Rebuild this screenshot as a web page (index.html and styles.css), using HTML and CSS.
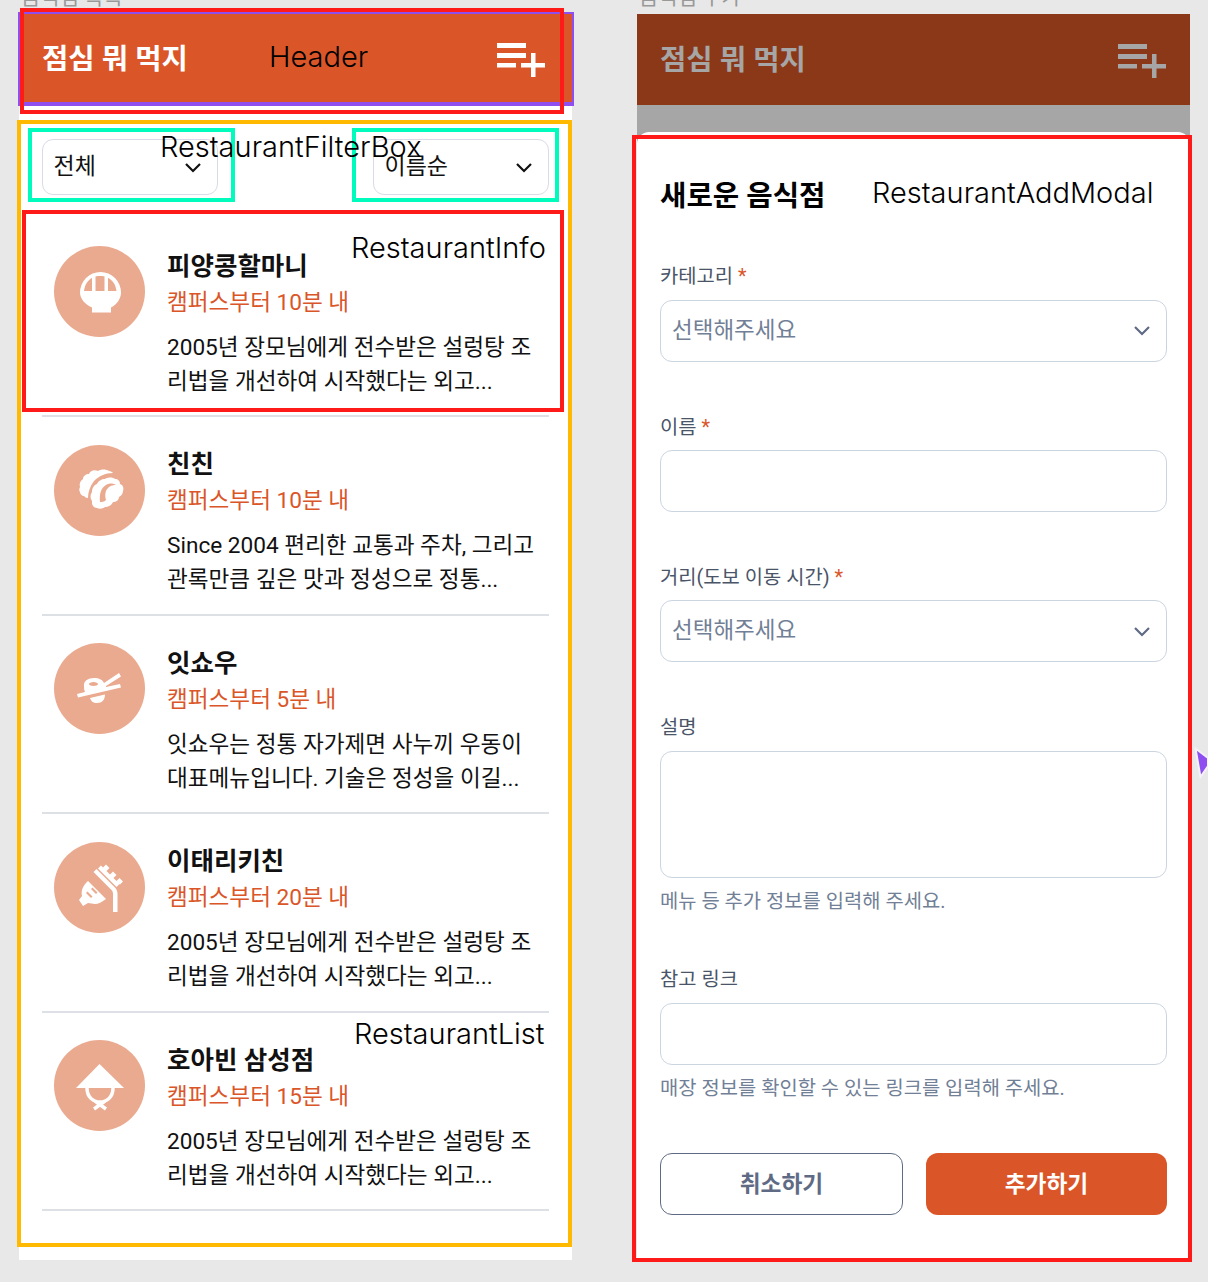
FILE: index.html
```html
<!DOCTYPE html>
<html lang="ko">
<head>
    <meta charset="UTF-8">
    <meta name="viewport" content="width=device-width, initial-scale=1.0">
    <title>점심 뭐 먹지</title>
    <link rel="stylesheet" href="styles.css">
</head>
<body>
    <div class="page">
        <section class="screen">
            <h2 class="screen-title">음식점 목록</h2>
            <div class="phone">
                <header class="header">
                    <h1 class="logo">점심 뭐 먹지</h1>
                    <svg class="add-icon" viewBox="0 0 48 34"><path d="M0 0h29v5H0zM0 10h29v5H0zM0 20h19v4.500H0zM24 20h10V10h4.500v10H48v4.500h-9.500V34H34v-9.500H24z"/></svg>
                </header>

                <div class="filters">
                    <div class="filter"><span>전체</span><svg class="chevron" viewBox="0 0 18 12"><path d="M2 2l7 7 7-7"/></svg></div>
                    <div class="filter"><span>이름순</span><svg class="chevron" viewBox="0 0 18 12"><path d="M2 2l7 7 7-7"/></svg></div>
                </div>

                <ul class="list">
                    <li class="item">
                        <div class="avatar">
                            <svg viewBox="0 0 70 70"><path fill-rule="evenodd" d="M35.500 15a20.500 20.500 0 0 1 20.500 20.500c0 6-4 12-10 15v5H27v-5c-7-3-12-9-12-15A20.500 20.500 0 0 1 35.500 15zM30.500 19.500V34h9V19.500c-3-.6-6-.6-9 0zM27 21c-4 2-7 6-8 13h8zM43 21v13h8.500c-1-7-4-11-8.500-13z"/></svg>
                        </div>
                        <div class="info">
                            <h3 class="name">피양콩할마니</h3>
                            <p class="distance">캠퍼스부터 10분 내</p>
                            <p class="desc">2005년 장모님에게 전수받은 설렁탕 조<br>리법을 개선하여 시작했다는 외고...</p>
                        </div>
                    </li>
                    <li class="item">
                        <div class="avatar">
                            <svg viewBox="0 0 70 70"><path d="M15 32c-1-3 0-6 3-8 0-3 3-5 6-5 1-3 5-5 9-3 3-2 8-2 11 0 2 0 3 1 4 2-8 0-14 3-19 8-4 5-6 11-6 17-2 0-3-1-4-2-2 0-4-2-4-4-1-1-1-3 0-5z"/><path fill-rule="evenodd" d="M27 46c-2-3-2-6 0-9 0-4 2-7 5-8 1-3 5-5 8-5 3-2 8-2 10 0 3 0 5 2 5 5 3 1 4 4 3 7 0 3-2 5-4 6 0 3-3 5-6 5-1 3-5 5-8 5-2 2-6 2-8 1-3 0-5-3-5-5zM35 47c-1-8 1-14 6-17 3-2 7-2 10 0-5 0-8 2-10 6-1 3-1 6 0 9-2 2-4 2-6 2z"/></svg>
                        </div>
                        <div class="info">
                            <h3 class="name">친친</h3>
                            <p class="distance">캠퍼스부터 10분 내</p>
                            <p class="desc">Since 2004 편리한 교통과 주차, 그리고<br>관록만큼 깊은 맛과 정성으로 정통...</p>
                        </div>
                    </li>
                    <li class="item">
                        <div class="avatar">
                            <svg viewBox="0 0 70 70"><path fill-rule="evenodd" d="M19 31c0-4 4-7 10-7 5 0 9 2 10 5l15-10 2 3.500-15 9.500v1l14-3 1 3.500-43 10-1-3.500 8-2c-1-2-1-4-1-7zM24 30c0 1 2 2 4.500 2s4.500-1 4.500-2-2-2-4.500-2-4.500 1-4.500 2z"/><path d="M25 44l15-3.500c0 5-3 8.500-8 8.500-4 0-6-2-7-5z"/></svg>
                        </div>
                        <div class="info">
                            <h3 class="name">잇쇼우</h3>
                            <p class="distance">캠퍼스부터 5분 내</p>
                            <p class="desc">잇쇼우는 정통 자가제면 사누끼 우동이<br>대표메뉴입니다. 기술은 정성을 이길...</p>
                        </div>
                    </li>
                    <li class="item">
                        <div class="avatar">
                            <svg viewBox="0 0 70 70"><path fill-rule="evenodd" d="M23 29l18 18c-4 3-8 5-11 5l-7-1-5 3-4-6 3-4c-1-4 0-10 6-15zM26 37l5 5 1.500-1.500-5-5zM21 41l5 5 1.500-1.500-5-5z"/><path d="M28.500 20l3-3 18 18c2 2 3 4 3 7v18h-4.500V42c0-2-.5-3-2-4.500zM33 16.500l3-3 18.500 18.500-3 3zM38 15.500l3-3 3.500 3.500-3 3zM45 22.500l3-3 3.500 3.500-3 3zM51.500 29l3-3 3.500 3.500-3 3z"/></svg>
                        </div>
                        <div class="info">
                            <h3 class="name">이태리키친</h3>
                            <p class="distance">캠퍼스부터 20분 내</p>
                            <p class="desc">2005년 장모님에게 전수받은 설렁탕 조<br>리법을 개선하여 시작했다는 외고...</p>
                        </div>
                    </li>
                    <li class="item">
                        <div class="avatar">
                            <svg viewBox="0 0 70 70"><path d="M34.500 13L59 37H11z"/><path class="hat-tie" d="M22 37c0 9 6 14 13 14s13-5 13-14M29 58l11-8M41 58l-11-8"/></svg>
                        </div>
                        <div class="info">
                            <h3 class="name">호아빈 삼성점</h3>
                            <p class="distance">캠퍼스부터 15분 내</p>
                            <p class="desc">2005년 장모님에게 전수받은 설렁탕 조<br>리법을 개선하여 시작했다는 외고...</p>
                        </div>
                    </li>
                </ul>
            </div>
        </section>

        <section class="screen">
            <h2 class="screen-title">음식점 추가</h2>
            <div class="phone phone-dim">
                <header class="header header-dim">
                    <h1 class="logo">점심 뭐 먹지</h1>
                    <svg class="add-icon" viewBox="0 0 48 34"><path d="M0 0h29v5H0zM0 10h29v5H0zM0 20h19v4.500H0zM24 20h10V10h4.500v10H48v4.500h-9.500V34H34v-9.500H24z"/></svg>
                </header>

                <form class="modal">
                    <h3 class="modal-title">새로운 음식점</h3>

                    <div class="fields">
                        <div class="field">
                            <label class="label">카테고리 <em>*</em></label>
                            <div class="control select"><span>선택해주세요</span><svg class="chevron chevron-gray" viewBox="0 0 18 12"><path d="M2 2l7 7 7-7"/></svg></div>
                        </div>
                        <div class="field">
                            <label class="label" for="name">이름 <em>*</em></label>
                            <input class="control" id="name" type="text">
                        </div>
                        <div class="field">
                            <label class="label">거리(도보 이동 시간) <em>*</em></label>
                            <div class="control select"><span>선택해주세요</span><svg class="chevron chevron-gray" viewBox="0 0 18 12"><path d="M2 2l7 7 7-7"/></svg></div>
                        </div>
                        <div class="field">
                            <label class="label" for="description">설명</label>
                            <textarea class="control textarea" id="description"></textarea>
                            <p class="hint">메뉴 등 추가 정보를 입력해 주세요.</p>
                        </div>
                        <div class="field">
                            <label class="label" for="link">참고 링크</label>
                            <input class="control" id="link" type="text">
                            <p class="hint">매장 정보를 확인할 수 있는 링크를 입력해 주세요.</p>
                        </div>
                    </div>

                    <div class="buttons">
                        <button class="btn btn-cancel" type="button">취소하기</button>
                        <button class="btn btn-add" type="submit">추가하기</button>
                    </div>
                </form>
            </div>
        </section>
    </div>

    <!-- figma annotations over the screens -->
    <div class="note-box box-header-purple"></div>
    <div class="note-box box-header-red"></div>
    <div class="note-box box-list"></div>
    <div class="note-box box-filter-a"></div>
    <div class="note-box box-filter-b"></div>
    <div class="note-box box-info"></div>
    <div class="note-box box-modal"></div>
    <span class="note note-header">Header</span>
    <span class="note note-filter">RestaurantFilterBox</span>
    <span class="note note-info">RestaurantInfo</span>
    <span class="note note-list">RestaurantList</span>
    <span class="note note-modal">RestaurantAddModal</span>
    <svg class="cursor" viewBox="0 0 14 32"><path d="M1.500 1.500L14 11v8L6.500 30z"/></svg>
</body>
</html>
```

FILE: styles.css
```css
* {
    box-sizing: border-box;
}
html, body {
    height: 100%;
}
body {
    margin: 0;
    height: 1282px;
    overflow: hidden;
    position: relative;
    background-color: #e8e8e8;
    font-family: Roboto, "Noto Sans CJK KR", sans-serif;
    color: #111;
}
h1, h2, h3, p, ul {
    margin: 0;
    padding: 0;
}
.page {
    display: flex;
    gap: 65px;
    padding-left: 19px;
}
.screen {
    width: 553px;
}
.screen-title {
    margin-top: -20px;
    height: 34px;
    padding-left: 2px;
    font-size: 21px;
    line-height: 34px;
    font-weight: 400;
    color: #999;
}
.phone {
    height: 1246px;
    background-color: #fff;
}
.phone-dim {
    display: flex;
    flex-direction: column;
    background-color: #a6a6a6;
}

/* header */
.header {
    height: 89px;
    display: flex;
    align-items: center;
    justify-content: space-between;
    padding: 0 27px 0 23px;
    background-color: #da5629;
    color: #fff;
}
.header-dim {
    height: 91px;
    padding-right: 24px;
    background-color: #8b3819;
    color: #a6a6a6;
}
.logo {
    font-size: 28.6px;
    font-weight: 700;
    line-height: 40px;
}
.add-icon {
    width: 48px;
    height: 34px;
    margin-top: 3px;
    fill: currentColor;
}

/* filters */
.filters {
    display: flex;
    justify-content: space-between;
    padding: 36px 23px 23.5px;
}
.filter {
    width: 176px;
    height: 56px;
    display: flex;
    align-items: center;
    justify-content: space-between;
    padding: 0 15px 0 10.5px;
    border: 1.5px solid #d8dce6;
    border-radius: 11px;
    font-size: 23px;
    background-color: #fff;
}
.filter span {
    margin-bottom: 6px;
}
.chevron {
    width: 18px;
    height: 12px;
    margin-top: 1px;
    fill: none;
    stroke: #111;
    stroke-width: 2.2;
}
.chevron-gray {
    stroke: #5f6b85;
}

/* restaurant list */
.list {
    list-style: none;
    padding: 0 23px;
}
.item {
    display: flex;
    gap: 22px;
    padding: 27.5px 0 16.5px 12px;
    border-bottom: 2px solid #dde1e6;
}
.avatar {
    flex: none;
    width: 91px;
    height: 91px;
    display: flex;
    align-items: center;
    justify-content: center;
    border-radius: 50%;
    background-color: #eaaa8f;
}
.avatar svg {
    width: 70px;
    height: 70px;
    fill: #fff;
}
.hat-tie {
    fill: none;
    stroke: #fff;
    stroke-width: 3.5;
}
.info {
    padding-top: 1.5px;
}
.name {
    font-size: 25.5px;
    line-height: 36px;
    font-weight: 700;
}
.distance {
    font-size: 22.6px;
    line-height: 37px;
    color: #da5629;
}
.desc {
    margin-top: 10px;
    font-size: 22.6px;
    line-height: 34px;
    white-space: nowrap;
}

/* add modal */
.modal {
    flex: 1;
    margin-top: 27px;
    padding: 46px 23px 0;
    border-radius: 12px 12px 0 0;
    background-color: #fff;
}
.modal-title {
    font-size: 28.7px;
    line-height: 36px;
    font-weight: 700;
    color: #000;
}
.fields {
    display: flex;
    flex-direction: column;
    gap: 52.75px;
    margin-top: 50.25px;
}
.label {
    display: block;
    margin-bottom: 9.5px;
    font-size: 19.85px;
    line-height: 26px;
    color: #4a5568;
}
.label em {
    font-style: normal;
    color: #da5629;
}
.control {
    display: block;
    width: 100%;
    height: 62px;
    border: 1.5px solid #cbd5e0;
    border-radius: 12px;
    background-color: #fff;
    font-family: inherit;
}
.select {
    display: flex;
    align-items: center;
    justify-content: space-between;
    padding: 0 15px 0 11px;
    font-size: 22.5px;
    color: #718096;
}
.select span {
    margin-bottom: 6px;
}
.textarea {
    height: 127px;
    resize: none;
}
.hint {
    margin-top: 11px;
    font-size: 19.85px;
    line-height: 26px;
    color: #718096;
}
.buttons {
    display: flex;
    gap: 23px;
    margin-top: 51.25px;
}
.btn {
    flex: 1;
    height: 62px;
    padding: 0 0 4px;
    border-radius: 12px;
    font-family: inherit;
    font-size: 22.7px;
    font-weight: 700;
}
.btn-cancel {
    border: 1.5px solid #5f6b85;
    background-color: #fff;
    color: #5f6b85;
}
.btn-add {
    border: none;
    background-color: #da5629;
    color: #fff;
}

/* annotations */
.note-box {
    position: absolute;
    border: 4.5px solid #ff1a1a;
}
.box-header-purple {
    left: 18px;
    top: 12px;
    width: 556px;
    height: 94px;
    border-width: 2px 2px 4px;
    border-color: #8e4ef0;
}
.box-header-red {
    left: 20px;
    top: 8px;
    width: 544px;
    height: 106px;
}
.box-list {
    left: 17px;
    top: 120px;
    width: 555px;
    height: 1127px;
    border-color: #ffb900;
}
.box-filter-a, .box-filter-b {
    top: 128px;
    width: 207px;
    height: 74px;
    border-color: #00fcbc;
}
.box-filter-a {
    left: 28px;
}
.box-filter-b {
    left: 352px;
}
.box-info {
    left: 22px;
    top: 210px;
    width: 542px;
    height: 202px;
}
.box-modal {
    left: 632px;
    top: 135px;
    width: 560px;
    height: 1127px;
}
.note {
    position: absolute;
    font-family: Inter, sans-serif;
    font-size: 29px;
    font-weight: 300;
    line-height: 36px;
    color: #000;
    white-space: nowrap;
}
.note-header {
    left: 269px;
    top: 39px;
}
.note-filter {
    left: 160px;
    top: 129px;
}
.note-info {
    left: 351px;
    top: 230px;
}
.note-list {
    left: 354px;
    top: 1016px;
}
.note-modal {
    left: 872px;
    top: 175px;
}
.cursor {
    position: absolute;
    left: 1194px;
    top: 747px;
    width: 14px;
    height: 32px;
    fill: #8e4ef0;
    stroke: #f4f1fa;
    stroke-width: 2;
}
```
